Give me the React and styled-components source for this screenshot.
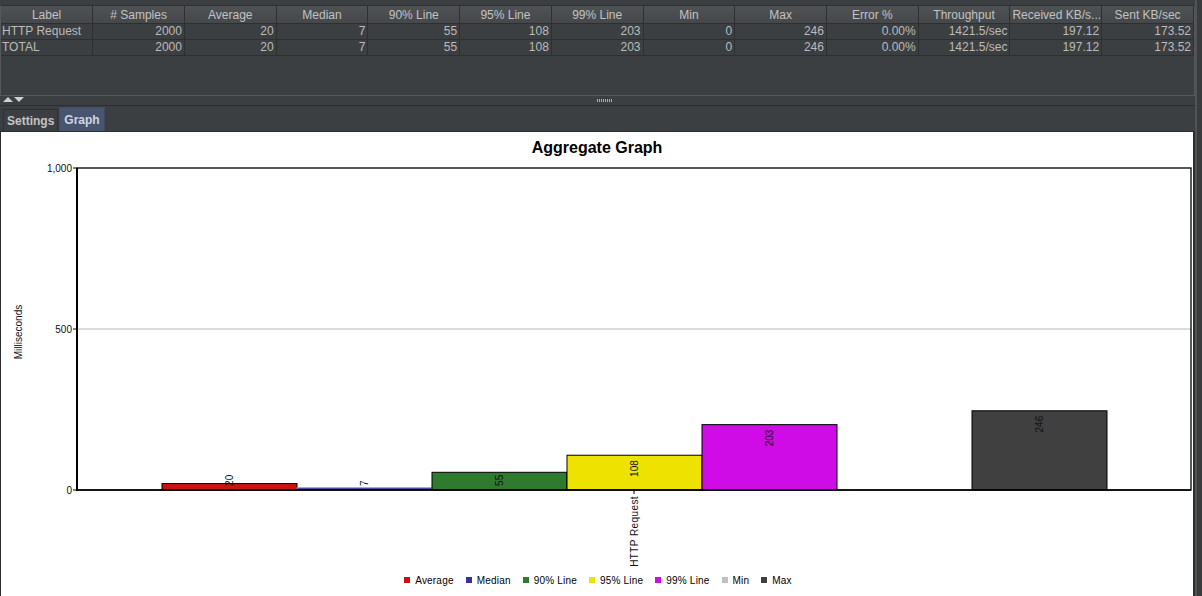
import React from 'react';
import styled, { createGlobalStyle } from 'styled-components';

const GlobalStyle = createGlobalStyle`
  html, body {
    margin: 0;
    padding: 0;
    background: #3c3f41;
  }
  body {
    font-family: "Liberation Sans", Arial, sans-serif;
  }
`;

const columns = [
  'Label', '# Samples', 'Average', 'Median', '90% Line', '95% Line', '99% Line',
  'Min', 'Max', 'Error %', 'Throughput', 'Received KB/s...', 'Sent KB/sec'
];

const rows = [
  ['HTTP Request', '2000', '20', '7', '55', '108', '203', '0', '246', '0.00%', '1421.5/sec', '197.12', '173.52'],
  ['TOTAL', '2000', '20', '7', '55', '108', '203', '0', '246', '0.00%', '1421.5/sec', '197.12', '173.52']
];

const series = [
  { name: 'Average', value: 20, color: '#cc1111' },
  { name: 'Median', value: 7, color: '#333399' },
  { name: '90% Line', value: 55, color: '#2e7a2e' },
  { name: '95% Line', value: 108, color: '#ede200' },
  { name: '99% Line', value: 203, color: '#cf0ce6' },
  { name: 'Min', value: 0, color: '#c0c0c0' },
  { name: 'Max', value: 246, color: '#404040' }
];

// plot area, in page coordinates
const plot = { left: 77, right: 1191, top: 168, bottom: 490, max: 1000 };
const barStart = 162;
const barWidth = 135;
const yFor = v => plot.bottom - (v / plot.max) * (plot.bottom - plot.top);

const Frame = styled.div`
  width: 1202px;
  height: 596px;
  display: grid;
  grid-template-columns: 1195px 7px;
  background: #3c3f41;
  overflow: hidden;
`;

const Main = styled.div`
  display: flex;
  flex-direction: column;
  min-width: 0;
`;

const SideStrip = styled.div`
  background: #393b3d;
  border-left: 2px solid #515456;
`;

const TablePane = styled.div`
  height: 96px;
  padding-top: 5px;
  box-sizing: border-box;
`;

const Viewport = styled.div`
  height: 91px;
  box-sizing: border-box;
  border: 1px solid #56595b;
  border-top: 1px solid #2e3032;
  background: #3c3f41;
`;

const Grid = styled.table`
  width: 100%;
  border-collapse: collapse;
  table-layout: fixed;
  font-size: 12px;
  color: #bbbbbb;
`;

const HeadCell = styled.th`
  height: 17px;
  padding: 0 2px;
  font-weight: normal;
  text-align: center;
  color: #c2c2c2;
  background: linear-gradient(#4f5254, #45484a);
  border-right: 1px solid #2d2f31;
  border-bottom: 1px solid #2d2f31;
  white-space: nowrap;
  overflow: hidden;
`;

const Cell = styled.td`
  height: 15px;
  line-height: 15px;
  padding: 0 2px 0 1px;
  text-align: ${p => (p.$left ? 'left' : 'right')};
  border-right: 1px solid #2d2f31;
  border-bottom: 1px solid #2d2f31;
  white-space: nowrap;
  overflow: hidden;
`;

const Divider = styled.div`
  height: 10px;
  box-sizing: border-box;
  border-bottom: 1px solid #2b2d2e;
  display: flex;
  align-items: flex-start;
  padding: 1px 0 0 3px;
`;

const Arrow = styled.span`
  width: 0;
  height: 0;
  border-left: 5px solid transparent;
  border-right: 5px solid transparent;
  ${p => (p.$up ? 'border-bottom: 5px solid #d0d0d0;' : 'border-top: 5px solid #d0d0d0;')}
  margin-right: 1px;
`;

const Grip = styled.span`
  width: 15px;
  height: 3px;
  margin: 2px 0 0 572px;
  background: repeating-linear-gradient(90deg, #c8c8c8 0 1px, transparent 1px 2px);
  opacity: 0.8;
`;

const TabBar = styled.div`
  height: 26px;
  display: flex;
  align-items: flex-end;
  padding-left: 3px;
  border-bottom: 1px solid #2b2d2e;
  box-sizing: border-box;
`;

const Tab = styled.div`
  height: ${p => (p.$active ? '24px' : '22px')};
  padding: 0 ${p => (p.$active ? '4px' : '3px')};
  display: flex;
  align-items: center;
  box-sizing: border-box;
  font-size: 12px;
  font-weight: bold;
  color: ${p => (p.$active ? '#cfd6e4' : '#c4c4c4')};
  background: ${p => (p.$active ? '#47556f' : '#3c3f41')};
  border: 1px solid ${p => (p.$active ? '#3f4b62' : '#2e3032')};
  border-bottom: 0;
  margin-right: 1px;
`;

const GraphPanel = styled.div`
  flex: 1;
  display: flex;
  flex-direction: column;
  background: #ffffff;
  border-left: 1px solid #2b2d2e;
  border-right: 2px solid #2b2d2e;
`;

const Title = styled.div`
  height: 28px;
  padding-top: 6px;
  box-sizing: border-box;
  text-align: center;
  font-size: 16px;
  font-weight: bold;
  color: #000;
  line-height: 20px;
`;

const Chart = styled.svg`
  display: block;
  flex: none;
  font-family: "Liberation Sans", Arial, sans-serif;
`;

const Legend = styled.div`
  flex: 1;
  display: flex;
  justify-content: center;
  align-items: center;
  gap: 12px;
  padding: 0 0 4px 2px;
  font-size: 10px;
  letter-spacing: 0.2px;
  color: #000;
`;

const LegendItem = styled.div`
  display: flex;
  align-items: center;
  gap: 5px;
`;

const Swatch = styled.span`
  width: 6px;
  height: 6px;
  background: ${p => p.$color};
`;

const labelWidth = text => text.length * 5.6;

const AggregateChart = () => (
  <Chart width={1192} height={408} viewBox="1 160 1192 408">
    <line x1={plot.left} x2={plot.right} y1={yFor(500)} y2={yFor(500)} stroke="#b8b8b8" strokeWidth="1" />
    {series.map((s, i) => {
      const top = yFor(s.value);
      const x = barStart + i * barWidth;
      return s.value > 0 ? (
        <rect key={s.name} x={x} y={top} width={barWidth} height={plot.bottom - top}
          fill={s.color} stroke={s.value < 10 ? '#9a9ad6' : '#000'} strokeWidth="1" />
      ) : null;
    })}
    <rect x={plot.left} y={plot.top} width={plot.right - plot.left} height={plot.bottom - plot.top}
      fill="none" stroke="#000" strokeWidth="1.3" />
    <line x1={plot.left} x2={plot.left} y1={plot.top} y2={plot.bottom + 1} stroke="#000" strokeWidth="2" />
    <line x1={plot.left} x2={plot.right} y1={plot.bottom} y2={plot.bottom} stroke="#000" strokeWidth="1.6" />

    {[1000, 500, 0].map(v => (
      <g key={v}>
        <line x1={plot.left - 4} x2={plot.left} y1={yFor(v)} y2={yFor(v)} stroke="#000" />
        <text x={plot.left - 5} y={yFor(v) + 3.5} fontSize="10" textAnchor="end" fill="#111">
          {v.toLocaleString('en-US')}
        </text>
      </g>
    ))}

    <text transform="translate(18 332) rotate(-90)" fontSize="10" textAnchor="middle" dominantBaseline="central" fill="#111">
      Milliseconds
    </text>

    {series.map((s, i) => {
      if (s.value === 0) return null;
      const cx = barStart + i * barWidth + barWidth / 2;
      const label = String(s.value);
      const top = Math.min(yFor(s.value) + 5, plot.bottom - 4 - labelWidth(label));
      return (
        <text key={s.name} transform={`translate(${cx} ${top}) rotate(-90)`} fontSize="10"
          textAnchor="end" dominantBaseline="central" fill="#111">
          {label}
        </text>
      );
    })}

    <line x1={634} x2={634} y1={plot.bottom} y2={plot.bottom + 4} stroke="#000" />
    <text transform="translate(634 496) rotate(-90)" fontSize="10" letterSpacing="0.4"
      textAnchor="end" dominantBaseline="central" fill="#111">
      HTTP Request
    </text>
  </Chart>
);

const App = () => (
  <>
    <GlobalStyle />
    <Frame>
      <Main>
        <TablePane>
          <Viewport>
            <Grid>
              <thead>
                <tr>
                  {columns.map(c => <HeadCell key={c}>{c}</HeadCell>)}
                </tr>
              </thead>
              <tbody>
                {rows.map(r => (
                  <tr key={r[0]}>
                    {r.map((v, i) => <Cell key={i} $left={i === 0}>{v}</Cell>)}
                  </tr>
                ))}
              </tbody>
            </Grid>
          </Viewport>
        </TablePane>
        <Divider>
          <Arrow $up />
          <Arrow />
          <Grip />
        </Divider>
        <TabBar>
          <Tab>Settings</Tab>
          <Tab $active>Graph</Tab>
        </TabBar>
        <GraphPanel>
          <Title>Aggregate Graph</Title>
          <AggregateChart />
          <Legend>
            {series.map(s => (
              <LegendItem key={s.name}>
                <Swatch $color={s.color} />
                {s.name}
              </LegendItem>
            ))}
          </Legend>
        </GraphPanel>
      </Main>
      <SideStrip />
    </Frame>
  </>
);

export default App;
